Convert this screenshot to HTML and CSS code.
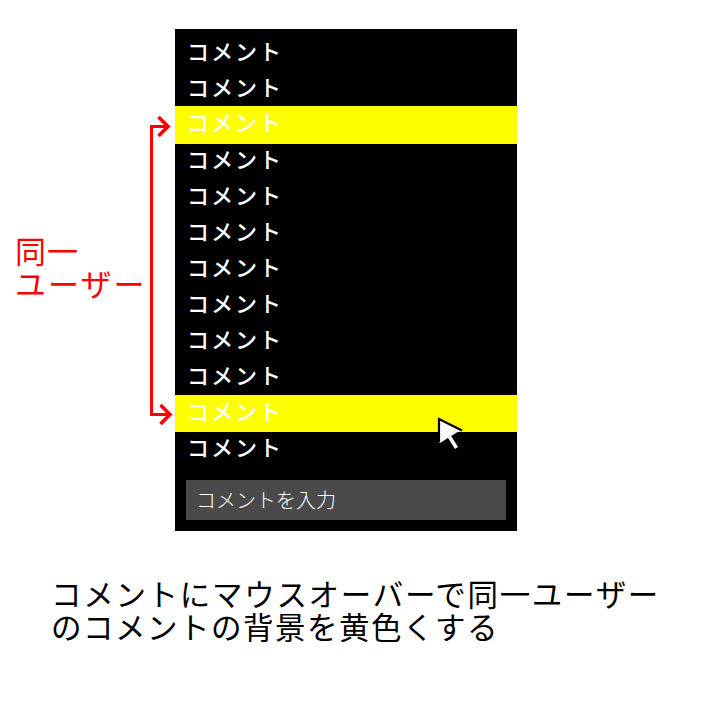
FILE: index.html
```html
<!DOCTYPE html>
<html lang="ja">
<head>
<meta charset="utf-8">
<title>コメント</title>
<link rel="stylesheet" href="styles.css">
</head>
<body>
<main class="figure">
  <aside class="note"><div>同一</div><div class="wide">ユーザー</div></aside>
  <svg class="bracket" width="30" height="320" viewBox="0 0 30 320" fill="none" stroke="#f00" stroke-width="3">
    <path d="M22 20.500H6.500V308.500H25"/>
    <path stroke-width="3.600" d="M13.500 11L23 20.500L13.500 30M15.500 299L25 308.500L15.500 318"/>
  </svg>
  <section class="panel">
    <ul class="comments">
      <li>コメント</li>
      <li>コメント</li>
      <li class="same-user first">コメント</li>
      <li>コメント</li>
      <li>コメント</li>
      <li>コメント</li>
      <li>コメント</li>
      <li>コメント</li>
      <li>コメント</li>
      <li>コメント</li>
      <li class="same-user second">コメント</li>
      <li>コメント</li>
    </ul>
    <div class="input">コメントを入力</div>
    <svg class="cursor" width="30" height="38" viewBox="0 0 30 38">
      <path d="M4 28V5L26 16L16 22L5 29Z" fill="#fff"/>
      <path d="M14 22L21.500 34" stroke="#fff" stroke-width="3.500"/>
      <path d="M4 28V5L27 16.500" fill="none" stroke="#000" stroke-width="2.200"/>
    </svg>
  </section>
</main>
<div class="caption"><div class="wide">コメントにマウスオーバーで同一ユーザー</div><div>のコメントの背景を黄色くする</div></div>
</body>
</html>
```
FILE: styles.css
```css
body { margin: 0; width: 720px; height: 720px; overflow: hidden; background: #fff; font-family: "Noto Sans CJK JP", sans-serif; }
.figure { display: grid; grid-template-columns: 145px 30px 342px; padding-top: 29px; }
.note { padding: 204px 0 0 15px; color: #f00; font-size: 31px; letter-spacing: 1px; line-height: 33px; white-space: nowrap; }
.note .wide { letter-spacing: 2px; }
.bracket { margin-top: 77px; }
.panel { position: relative; box-sizing: border-box; height: 502px; padding-top: 5px; background: #000; color: #fff; }
.comments { margin: 0; padding: 0; list-style: none; font-size: 22px; letter-spacing: 2px; font-weight: 500; line-height: 33px; }
.comments li { box-sizing: border-box; height: 36px; padding-left: 12px; }
.comments .same-user { background: #ff0; }
.comments .first { height: 38px; margin-bottom: -2px; line-height: 31px; }
.comments .second { height: 37px; margin-top: 1px; margin-bottom: -2px; line-height: 31px; }
.input { margin: 14px 11px 0; padding-left: 10px; height: 40px; background: #4a4a4a; font-size: 20px; font-weight: 300; line-height: 40px; }
.cursor { position: absolute; left: 260px; top: 385px; }
.caption { margin: 46px 0 0 51px; font-size: 30.5px; letter-spacing: 1.5px; line-height: 33px; white-space: nowrap; }
.caption .wide { letter-spacing: 1.7px; }
```
